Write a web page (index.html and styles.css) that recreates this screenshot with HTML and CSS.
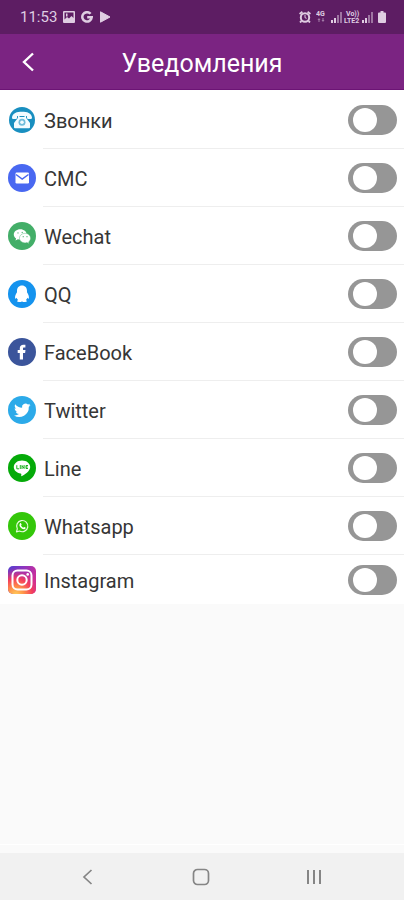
FILE: index.html
```html
<!DOCTYPE html>
<html lang="ru">
<head>
<meta charset="utf-8">
<meta name="viewport" content="width=device-width, initial-scale=1">
<title>Уведомления</title>
<link rel="stylesheet" href="styles.css">
</head>
<body>
<div class="status">
  <div class="status-left">
    <span class="time">11:53</span>
    <svg width="12" height="12" viewBox="0 0 12 12"><path fill="currentColor" fill-rule="evenodd" d="M1 0h10v0a1 1 0 0 1 1 1v10a1 1 0 0 1-1 1H1a1 1 0 0 1-1-1V1a1 1 0 0 1 1-1zM1.500 1.500v7l2.500-2.500 2 1.500 2.500-2.500 2 2V1.500zM3 2.500h1.500v3H3z"/></svg>
    <svg width="12" height="12" viewBox="0 0 12 12"><path d="M9.600 2.800A4.700 4.700 0 1 0 10.700 6.300H6.200" fill="none" stroke="currentColor" stroke-width="2.500"/></svg>
    <svg width="12" height="12" viewBox="0 0 12 12"><path d="M1.500.8 11 6l-9.500 5.200z" fill="currentColor" stroke="currentColor" stroke-linejoin="round"/></svg>
  </div>
  <div class="status-right">
    <svg width="12" height="12" viewBox="0 0 12 12" fill="none" stroke="currentColor"><circle cx="6" cy="6.500" r="4.200" stroke-width="2"/><path d="M.6 3 3.400.8M11.400 3 8.600.8M2.500 10 1 11.500M9.500 10l1.500 1.500" stroke-width="1.800"/><path d="M6 4v2.700l1.600.6"/></svg>
    <svg width="10" height="14" viewBox="0 0 10 14" fill="currentColor"><text class="net" x="0" y="6">4G</text><path d="M3 8l1.500 2h-1v2h-1v-2h-1zM7 12l-1.500-2h1V8h1v2h1z" opacity=".55"/></svg>
    <svg width="11" height="12" viewBox="0 0 11 12" fill="currentColor"><path d="M0 9h2v3H0zM3 7h2v5H3z"/><path d="M6 4h2v8H6zM9 1h2v11H9z" opacity=".5"/></svg>
    <svg class="joined" width="16" height="14" viewBox="0 0 16 14" fill="currentColor"><text class="net" x="2" y="6">Vo))</text><text class="net" x="0" y="13">LTE2</text></svg>
    <svg class="joined" width="11" height="12" viewBox="0 0 11 12" fill="currentColor"><path d="M0 9h2v3H0zM3 7h2v5H3z"/><path d="M6 4h2v8H6zM9 1h2v11H9z" opacity=".5"/></svg>
    <svg width="8" height="12" viewBox="0 0 8 12"><path fill="currentColor" d="M2.500 0h3v1.500H7a1 1 0 0 1 1 1V11a1 1 0 0 1-1 1H1a1 1 0 0 1-1-1V2.500a1 1 0 0 1 1-1h1.500z"/></svg>
  </div>
</div>
<header class="bar">
  <button class="back" type="button" aria-label="Назад"><svg width="12" height="20" viewBox="0 0 12 20"><path d="M11 1.500 2 10l9 8.500" fill="none" stroke="currentColor" stroke-width="2.400"/></svg></button>
  <h1>Уведомления</h1>
</header>
<main>
<ul class="list">
  <li class="row">
    <svg class="icon" viewBox="0 0 28 28"><circle cx="14" cy="14" r="13" fill="#198fc0"/><path fill="#f2fbff" d="M4 11.500C4.500 7 9 5.800 14 5.800s9.500 1.200 10 5.700c0 1-.6 1.500-1.600 1.500h-2c-1 0-1.500-.6-1.500-1.500V10H9.100v1.500c0 .9-.5 1.500-1.500 1.500h-2C4.600 13 4 12.500 4 11.500z"/><path fill="#f2fbff" d="M10 9.500h1.500V11h5V9.500H18v2.200l4 5.300v4.300a1 1 0 0 1-1 1H7a1 1 0 0 1-1-1V17l4-5.300z"/><circle cx="14" cy="16.300" r="3.500" fill="#6fbcdb"/><circle cx="14" cy="16.300" r="1.800" fill="#f2fbff"/></svg>
    <label for="calls">Звонки</label><input class="switch" type="checkbox" role="switch" id="calls">
  </li>
  <li class="row">
    <svg class="icon" viewBox="0 0 28 28"><circle cx="14" cy="14" r="14" fill="#4968f1"/><rect x="7.500" y="8.500" width="13.500" height="11" rx="1.200" fill="#fff"/><path d="M8 10.500 14.200 15l6.300-4.500" fill="none" stroke="#4968f1" stroke-width="1.500"/></svg>
    <label for="sms">СМС</label><input class="switch" type="checkbox" role="switch" id="sms">
  </li>
  <li class="row">
    <svg class="icon" viewBox="0 0 28 28"><circle cx="14" cy="14" r="14" fill="#43ae68"/><path fill="#fff" d="M12.300 7.200c-3.700 0-6.500 2.400-6.500 5.300 0 1.700.9 3.100 2.300 4l-.6 2 2.400-1.200c.8.200 1.600.3 2.400.3 3.600 0 6.400-2.200 6.400-5.100s-2.800-5.300-6.400-5.300z"/><path fill="#fff" stroke="#43ae68" stroke-width=".4" d="M17.100 11.300c-3.300 0-5.700 2.200-5.700 4.800s2.500 4.800 5.700 4.800c.7 0 1.300-.1 1.900-.3l2.100 1.100-.5-1.800c1.200-.9 2-2.200 2-3.700 0-2.700-2.400-4.900-5.500-4.900z"/><g fill="#43ae68"><circle cx="10" cy="10.900" r=".6"/><circle cx="14.200" cy="10.400" r=".6"/><circle cx="15.200" cy="14.700" r=".6"/><circle cx="19" cy="14.700" r=".6"/></g></svg>
    <label for="wechat">Wechat</label><input class="switch" type="checkbox" role="switch" id="wechat">
  </li>
  <li class="row">
    <svg class="icon" viewBox="0 0 28 28"><circle cx="14" cy="14" r="14" fill="#1593ee"/><path fill="#fff" d="M14 5.500c-3.200 0-5 2.400-5 5.200v1.500c-1.300 1.900-2.200 4.200-1.900 6 .2.800.8.500 1.500-.5.300 1 .8 1.700 1.500 2.400-1.700.8-1.300 2 .9 2 1.300 0 2.500-.3 3-.9.500.6 1.700.9 3 .9 2.200 0 2.600-1.200.9-2 .7-.7 1.200-1.400 1.500-2.400.7 1 1.300 1.300 1.500.5.300-1.800-.6-4.100-1.900-6v-1.500c0-2.800-1.800-5.200-5-5.200z"/></svg>
    <label for="qq">QQ</label><input class="switch" type="checkbox" role="switch" id="qq">
  </li>
  <li class="row">
    <svg class="icon" viewBox="0 0 28 28"><circle cx="14" cy="14" r="14" fill="#3b559b"/><path fill="#fff" d="M11.800 21.500V15H9.700v-2.900h2.100v-1.900c0-2.300 1.400-3.500 3.600-3.500h2v2.800H16c-.8 0-1 .4-1 1.100v1.500h2.500L17.100 15H15v6.500z"/></svg>
    <label for="facebook">FaceBook</label><input class="switch" type="checkbox" role="switch" id="facebook">
  </li>
  <li class="row">
    <svg class="icon" viewBox="0 0 28 28"><circle cx="14" cy="14" r="14" fill="#2caae9"/><path fill="#fff" d="M22.500 9c-.6.300-1.200.5-1.900.6.700-.4 1.200-1 1.400-1.800-.6.400-1.300.6-2.100.8a3.400 3.400 0 0 0-5.800 3.100c-2.800-.1-5.200-1.500-6.900-3.500-.9 1.500-.4 3.500 1 4.500-.5 0-1-.2-1.500-.4 0 1.600 1.100 3 2.700 3.300-.5.100-1 .2-1.500.1.400 1.300 1.600 2.300 3.100 2.300a6.800 6.800 0 0 1-5 1.400 9.600 9.600 0 0 0 14.800-8.600c.7-.5 1.200-1.100 1.700-1.800z"/></svg>
    <label for="twitter">Twitter</label><input class="switch" type="checkbox" role="switch" id="twitter">
  </li>
  <li class="row">
    <svg class="icon" viewBox="0 0 28 28"><circle cx="14" cy="14" r="14" fill="#05aa09"/><path fill="#fff" d="M14 6.500c-4.700 0-8.200 2.900-8.200 6.600 0 3.300 2.900 6 6.800 6.500.9.200.8.700.6 2.100 0 .5.300.7.800.4 2.200-1.200 8.200-4.600 8.200-9 0-3.700-3.500-6.600-8.200-6.600z"/><path d="M8.800 11.200v3.600h2.300M12.300 11v4M14 15v-3.500l2.100 3V11M20 11.500h-2v3h2M18 13h1.700" fill="none" stroke="#05aa09" stroke-width=".9"/></svg>
    <label for="line">Line</label><input class="switch" type="checkbox" role="switch" id="line">
  </li>
  <li class="row">
    <svg class="icon" viewBox="0 0 28 28"><circle cx="14" cy="14" r="14" fill="#34c70a"/><path d="m8.500 19.800.8-3a5.600 5.600 0 1 1 2.200 2.200z" fill="none" stroke="#e6fbdc" stroke-width="1.200" stroke-linejoin="round"/><path fill="#fff" d="M12.200 11.200c.3-.3.700-.2.900.2l.5 1.200c.1.300-.4.700-.6 1 .5 1 1.300 1.700 2.300 2.100.3-.3.600-.9.900-.8l1.300.7c.3.200.1.900-.2 1.200-1.100 1-2.700.4-3.900-.5-1-.8-1.800-1.800-2-3-.1-.9.300-1.600.8-2.100z"/></svg>
    <label for="whatsapp">Whatsapp</label><input class="switch" type="checkbox" role="switch" id="whatsapp">
  </li>
  <li class="row">
    <svg class="icon" viewBox="0 0 28 28"><defs><linearGradient id="sky" x1="0" y1="0" x2="1" y2=".35"><stop offset="0" stop-color="#503fd0"/><stop offset=".5" stop-color="#8b35c0"/><stop offset="1" stop-color="#cb2e9b"/></linearGradient><radialGradient id="sun" cx=".28" cy="1.050" r="1"><stop offset="0" stop-color="#ffd25c"/><stop offset=".3" stop-color="#ff9148"/><stop offset=".6" stop-color="#f33e5c"/><stop offset="1" stop-color="#d22c96" stop-opacity="0"/></radialGradient></defs><rect width="28" height="28" rx="5" fill="url(#sky)"/><rect width="28" height="28" rx="5" fill="url(#sun)"/><g fill="none" stroke="#fff" stroke-width="2"><rect x="4.500" y="4.500" width="19" height="19" rx="5"/><circle cx="14" cy="14" r="4.700"/></g><circle cx="19.700" cy="8.400" r="1.300" fill="#fff"/></svg>
    <label for="instagram">Instagram</label><input class="switch" type="checkbox" role="switch" id="instagram">
  </li>
</ul>
</main>
<nav class="nav">
  <button type="button" aria-label="Назад"><svg width="20" height="20" viewBox="0 0 20 20"><path d="M13.500 3 6 10l7.500 7" fill="none" stroke="currentColor" stroke-width="1.700"/></svg></button>
  <button type="button" aria-label="Главный экран"><svg width="20" height="20" viewBox="0 0 20 20"><rect x="2.500" y="2.500" width="15" height="15" rx="4" fill="none" stroke="currentColor" stroke-width="1.700"/></svg></button>
  <button type="button" aria-label="Последние приложения"><svg width="20" height="20" viewBox="0 0 20 20"><path d="M4 3v14M10 3v14M16 3v14" stroke="currentColor" stroke-width="2"/></svg></button>
</nav>
</body>
</html>
```
FILE: styles.css
```css
* {
  box-sizing: border-box;
}

body {
  margin: 0;
  min-height: 100vh;
  display: flex;
  flex-direction: column;
  background: #fafafa;
  color: #363636;
  font-family: Roboto, "Noto Sans", sans-serif;
}

button {
  border: 0;
  padding: 0;
  background: none;
  color: inherit;
  display: flex;
  align-items: center;
  justify-content: center;
}

.status {
  height: 34px;
  padding: 0 18px 0 20px;
  display: flex;
  align-items: center;
  justify-content: space-between;
  background: #5d1d63;
  color: #dfcde2;
}

.status-left,
.status-right {
  display: flex;
  align-items: center;
}

.status-left {
  gap: 6px;
}

.status-right {
  gap: 5px;
}

.status-right .joined {
  margin-left: -3px;
}

.time {
  font-size: 15px;
  line-height: 20px;
}

.net {
  font-size: 7px;
  font-weight: 700;
}

.bar {
  height: 56px;
  display: grid;
  grid-template-columns: 56px 1fr 56px;
  align-items: center;
  background: #7b2482;
  border-bottom: 1px solid #6c1475;
  color: #fff;
}

.back {
  height: 55px;
}

.bar h1 {
  margin: 0;
  padding-top: 4px;
  font-size: 25px;
  line-height: 32px;
  font-weight: 400;
  text-align: center;
}

main {
  flex: 1;
  border-bottom: 1px solid #fff;
  margin-bottom: 8px;
}

.list {
  list-style: none;
  margin: 0;
  padding: 1px 0 0;
  background: #fff;
}

.row {
  height: 58px;
  padding: 0 7px 0 8px;
  display: flex;
  align-items: center;
  gap: 8px;
  background: linear-gradient(#eee, #eee) 43px 100% / 100% 1px no-repeat;
}

.row:last-child {
  height: 49px;
  background: none;
}

.icon {
  width: 28px;
  height: 28px;
  flex: none;
}

.row label {
  flex: 1;
  padding-top: 2px;
  font-size: 20px;
  line-height: 28px;
}

.switch {
  appearance: none;
  width: 49px;
  height: 30px;
  margin: 0;
  padding: 0 5px;
  flex: none;
  display: flex;
  align-items: center;
  border-radius: 15px;
  background: #969696;
}

.switch::before {
  content: "";
  width: 24px;
  height: 24px;
  border-radius: 50%;
  background: #fff;
}

.switch:checked {
  justify-content: flex-end;
  background: #7b2482;
}

.nav {
  height: 47px;
  padding: 0 34px 0 31px;
  display: grid;
  grid-template-columns: repeat(3, 1fr);
  background: #f1f1f1;
  color: #858585;
}
```
